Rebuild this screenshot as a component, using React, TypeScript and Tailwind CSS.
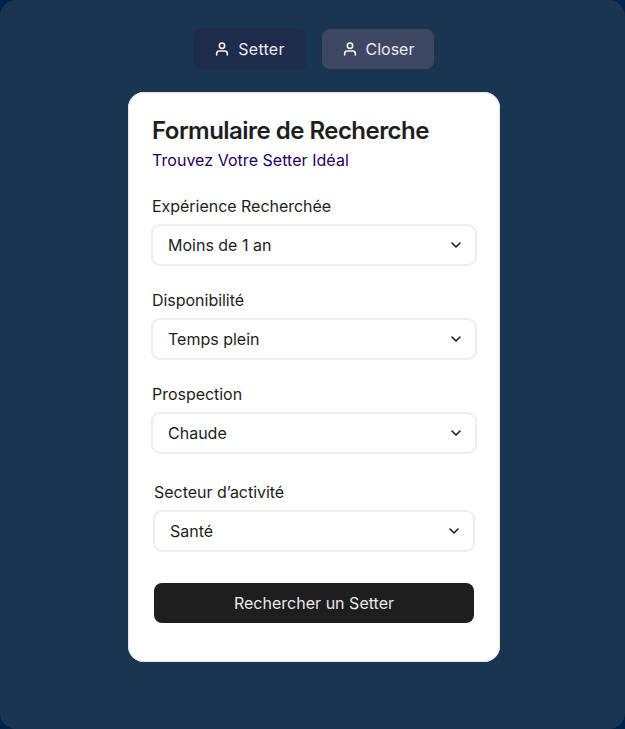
const UserIcon = () => (
  <svg width="16" height="16" viewBox="0 0 16 16" fill="none" stroke="#f3f3f3" strokeWidth="1.6" strokeLinecap="round" strokeLinejoin="round">
    <path d="M13.333 14v-1.333A2.667 2.667 0 0 0 10.667 10H5.333a2.667 2.667 0 0 0-2.666 2.667V14" />
    <circle cx="8" cy="4.667" r="2.667" />
  </svg>
);

const Chevron = () => (
  <svg width="16" height="16" viewBox="0 0 16 16" fill="none" stroke="#1e1e1e" strokeWidth="1.6" strokeLinecap="round" strokeLinejoin="round">
    <path d="m4 6 4 4 4-4" />
  </svg>
);

function Field({ label, value, className }: { label: string; value: string; className: string }) {
  return (
    <div className={`flex flex-col gap-2 ${className}`}>
      <label className="text-base leading-[22px] tracking-[-0.03px]">{label}</label>
      <div className="flex h-10 items-center justify-between rounded-lg pr-3 pl-4 shadow-[0_0_0_1px_#ececec,inset_0_0_0_1px_#ececec]">
        <span className="text-base leading-4">{value}</span>
        <Chevron />
      </div>
    </div>
  );
}

export default function App() {
  return (
    <div className="h-[729px] w-[625px] bg-[#00234a] font-['Inter',sans-serif]">
      <div className="flex h-full flex-col items-center rounded-2xl bg-[#1a3551] pt-[29px]">
        <div className="ml-[3px] flex gap-4 text-base leading-4 text-[#e9ebee]">
          <button className="flex h-10 w-28 items-center justify-center gap-2 rounded-lg bg-[#1e2c4b] pr-px tracking-[0.25px] ring-1 ring-[#1e2c4b]/40">
            <UserIcon />
            Setter
          </button>
          <button className="flex h-10 w-28 items-center justify-center gap-2 rounded-lg bg-[#3d4763]">
            <UserIcon />
            Closer
          </button>
        </div>
        <main className="mt-[23px] ml-[3px] flex h-[570px] w-[372px] flex-col rounded-2xl bg-white px-6 pt-6 text-[#1e1e1e] shadow-[inset_0_0_0_1px_#e3e6e8]">
          <h1 className="text-2xl leading-[29px] font-semibold tracking-[-0.53px]">Formulaire de Recherche</h1>
          <p className="mt-1 text-base leading-[22px] tracking-[0.04px] text-[#1f0060]">Trouvez Votre Setter Idéal</p>
          <Field label="Expérience Recherchée" value="Moins de 1 an" className="mt-6" />
          <Field label="Disponibilité" value="Temps plein" className="mt-6" />
          <Field label="Prospection" value="Chaude" className="mt-6" />
          <Field label="Secteur d’activité" value="Santé" className="mx-0.5 mt-7" />
          <button className="mx-0.5 mt-8 h-10 rounded-lg bg-[#1e1e1e] text-base leading-4 tracking-[0.02px] text-[#e9e9e9]">Rechercher un Setter</button>
        </main>
      </div>
    </div>
  );
}
